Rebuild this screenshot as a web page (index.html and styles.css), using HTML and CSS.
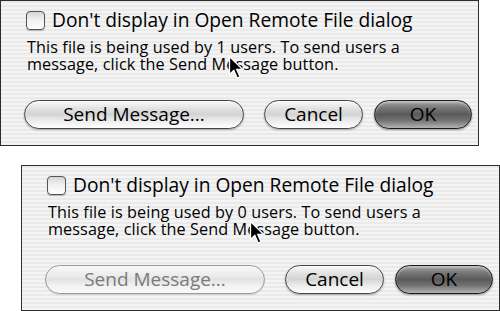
FILE: index.html
```html
<!DOCTYPE html>
<html>
<head>
<meta charset="utf-8">
<link rel="stylesheet" href="styles.css">
</head>
<body>
<div class="page">
  <div class="dialog">
    <div class="check-row"><span class="checkbox"></span><span class="check-label">Don't display in Open Remote File dialog</span></div>
    <p class="msg">This file is being used by 1 users. To send users a<br>message, click the Send Message button.</p>
    <div class="buttons">
      <button class="btn send">Send Message...</button>
      <button class="btn cancel">Cancel</button>
      <button class="btn ok">OK</button>
    </div>
    <svg class="cursor" width="17" height="25" viewBox="0 0 17 25"><path d="M1.5 1.5 L1.5 19.5 L5.8 15.3 L9.2 23 L12 21.8 L8.7 14.3 L14.5 14.3 Z" fill="#000" stroke="#fff" stroke-width="1.3" stroke-linejoin="miter"/></svg>
  </div>
  <div class="dialog second">
    <div class="check-row"><span class="checkbox"></span><span class="check-label">Don't display in Open Remote File dialog</span></div>
    <p class="msg">This file is being used by 0 users. To send users a<br>message, click the Send Message button.</p>
    <div class="buttons">
      <button class="btn send" disabled>Send Message...</button>
      <button class="btn cancel">Cancel</button>
      <button class="btn ok">OK</button>
    </div>
    <svg class="cursor" width="17" height="25" viewBox="0 0 17 25"><path d="M1.5 1.5 L1.5 19.5 L5.8 15.3 L9.2 23 L12 21.8 L8.7 14.3 L14.5 14.3 Z" fill="#000" stroke="#fff" stroke-width="1.3" stroke-linejoin="miter"/></svg>
  </div>
</div>
</body>
</html>
```

FILE: styles.css
```css
html, body {
  margin: 0;
  padding: 0;
  background: #ffffff;
}
.page {
  display: flex;
  flex-direction: column;
  align-items: flex-start;
  width: 500px;
  height: 311px;
  overflow: hidden;
}
.dialog {
  position: relative;
  box-sizing: border-box;
  width: 479px;
  height: 146px;
  border: 1px solid #2e2e2e;
  background: repeating-linear-gradient(to bottom, #eaeaea 0px, #eaeaea 2px, #f4f4f4 2px, #f4f4f4 4px);
  padding: 8px 6px 0 22px;
  font-family: "Open Sans", "Liberation Sans", sans-serif;
  color: #000;
}
.dialog.second {
  margin-left: 21px;
  margin-top: 19px;
}
.check-row {
  display: flex;
  align-items: center;
  height: 22px;
  padding-left: 3px;
}
.checkbox {
  box-sizing: border-box;
  width: 19px;
  height: 19px;
  border: 1px solid #555;
  border-radius: 4px;
  background: linear-gradient(to bottom, #d4d4d4 0%, #f0f0f0 45%, #ffffff 100%);
  box-shadow: 0 1px 1px rgba(0,0,0,0.25);
  margin-right: 7px;
}
.check-label {
  font-size: 19.2px;
  line-height: 22px;
  white-space: nowrap;
}
.msg {
  margin: 8px 0 0 4px;
  font-size: 16.2px;
  letter-spacing: 0.1px;
  line-height: 17px;
  white-space: nowrap;
}
.buttons {
  display: flex;
  margin-top: 27px;
}
.btn {
  box-sizing: border-box;
  height: 29px;
  border: 1px solid #444;
  border-radius: 15px;
  font-family: "Open Sans", "Liberation Sans", sans-serif;
  font-size: 19px;
  line-height: 25px;
  color: #000;
  padding: 0;
  background: linear-gradient(to bottom, #fafafa 0%, #e0e0e0 30%, #d4d4d4 50%, #eaeaea 70%, #ffffff 100%);
  box-shadow: 0 1px 2px rgba(0,0,0,0.3), inset 0 1px 1px rgba(255,255,255,0.9);
}
.btn.send {
  width: 220px;
  margin-left: 1px;
}
.btn.send:disabled {
  color: #7a7a7a;
  border-color: #9a9a9a;
  background: linear-gradient(to bottom, #f8f8f8 0%, #ececec 35%, #e2e2e2 50%, #f0f0f0 70%, #fbfbfb 100%);
  box-shadow: 0 1px 1px rgba(0,0,0,0.12);
}
.btn.cancel {
  width: 99px;
  margin-left: 20px;
}
.btn.ok {
  width: 98px;
  margin-left: 11px;
  border-color: #1a1a1a;
  background: linear-gradient(to bottom, #a4a4a4 0%, #777 25%, #5a5a5a 50%, #727272 72%, #b2b2b2 100%);
  box-shadow: 0 1px 2px rgba(0,0,0,0.4), inset 0 2px 2px rgba(255,255,255,0.35);
}
.cursor {
  position: absolute;
  left: 227px;
  top: 54px;
}
```
